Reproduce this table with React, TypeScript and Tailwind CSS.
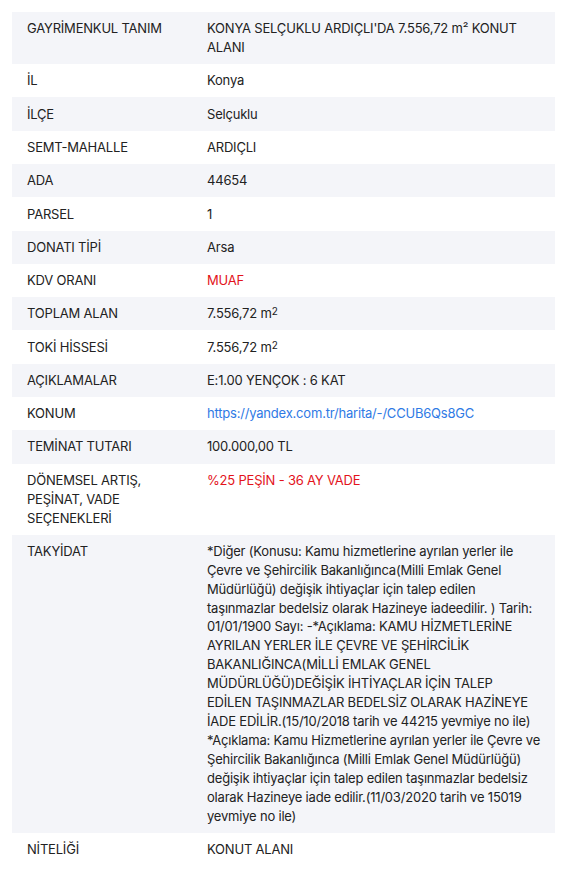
import React from "react";

type Row = { label: React.ReactNode; value: React.ReactNode };

const rows: Row[] = [
  { label: "GAYRİMENKUL TANIM", value: "KONYA SELÇUKLU ARDIÇLI'DA 7.556,72 m² KONUT ALANI" },
  { label: "İL", value: "Konya" },
  { label: "İLÇE", value: "Selçuklu" },
  { label: "SEMT-MAHALLE", value: "ARDIÇLI" },
  { label: "ADA", value: "44654" },
  { label: "PARSEL", value: "1" },
  { label: "DONATI TİPİ", value: "Arsa" },
  { label: "KDV ORANI", value: <span className="text-[#e3131b]">MUAF</span> },
  {
    label: "TOPLAM ALAN",
    value: (
      <>
        7.556,72 m<sup className="text-[10px] relative -top-[3px]">2</sup>
      </>
    ),
  },
  {
    label: "TOKİ HİSSESİ",
    value: (
      <>
        7.556,72 m<sup className="text-[10px] relative -top-[3px]">2</sup>
      </>
    ),
  },
  { label: "AÇIKLAMALAR", value: "E:1.00 YENÇOK : 6 KAT" },
  {
    label: "KONUM",
    value: <span className="text-[#2f7ae5]">https://yandex.com.tr/harita/-/CCUB6Qs8GC</span>,
  },
  { label: "TEMİNAT TUTARI", value: "100.000,00 TL" },
  {
    label: "DÖNEMSEL ARTIŞ, PEŞİNAT, VADE SEÇENEKLERİ",
    value: <span className="text-[#e3131b]">%25 PEŞİN - 36 AY VADE</span>,
  },
  {
    label: "TAKYİDAT",
    value: (
      <>
        *Diğer (Konusu: Kamu hizmetlerine ayrılan yerler ile Çevre ve Şehircilik Bakanlığınca(Milli Emlak Genel Müdürlüğü) değişik ihtiyaçlar için talep edilen taşınmazlar bedelsiz olarak Hazineye iadeedilir. ) Tarih: 01/01/1900 Sayı: -*Açıklama: KAMU HİZMETLERİNE AYRILAN YERLER İLE ÇEVRE VE ŞEHİRCİLİK BAKANLIĞINCA(MİLLİ EMLAK GENEL MÜDÜRLÜĞÜ)DEĞİŞİK İHTİYAÇLAR İÇİN TALEP
        <br />
        EDİLEN TAŞINMAZLAR BEDELSİZ OLARAK HAZİNEYE İADE EDİLİR.(15/10/2018 tarih ve 44215 yevmiye no ile) *Açıklama: Kamu Hizmetlerine ayrılan yerler ile Çevre ve Şehircilik Bakanlığınca (Milli Emlak Genel Müdürlüğü) değişik ihtiyaçlar için talep edilen taşınmazlar bedelsiz olarak Hazineye iade edilir.(11/03/2020 tarih ve 15019 yevmiye no ile)
      </>
    ),
  },
  { label: "NİTELİĞİ", value: "KONUT ALANI" },
];

export default function App() {
  return (
    <div
      className="bg-white p-[12px] text-[#222222] text-[13px] leading-[18.9px] tracking-[-0.2px]"
      style={{ fontFamily: "Inter, 'Noto Sans', Arial, sans-serif" }}
    >
      <div className="w-[543px] flex flex-col">
        {rows.map((r, i) => (
          <div
            key={i}
            className={`flex ${i % 2 === 0 ? "bg-[#f4f5f9]" : "bg-white"}`}
          >
            <div className="w-[180px] shrink-0 px-[15px] py-[7.2px]">{r.label}</div>
            <div className="flex-1 pl-[15px] pr-[12.5px] py-[7.2px]">{r.value}</div>
          </div>
        ))}
      </div>
    </div>
  );
}
